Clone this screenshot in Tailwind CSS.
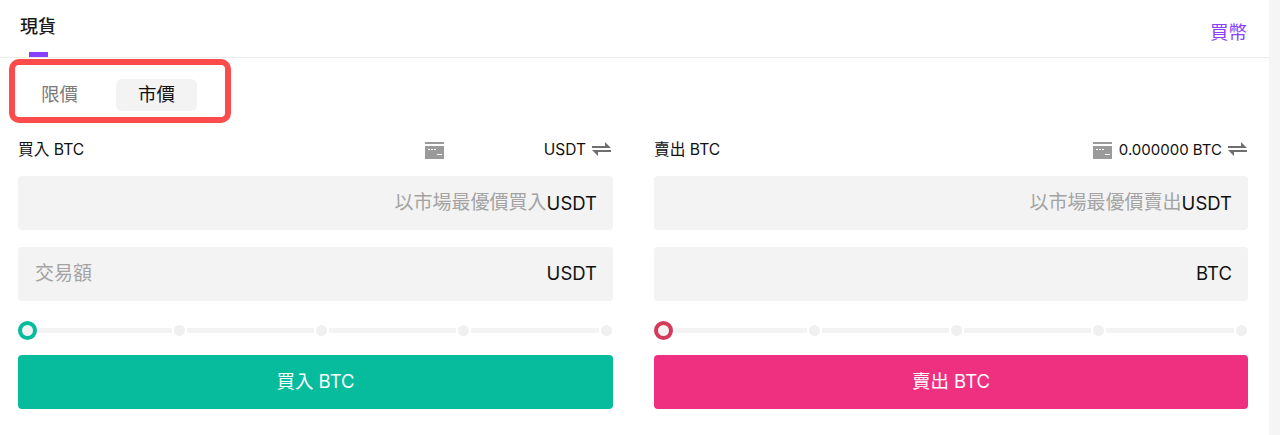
<!DOCTYPE html>
<html lang="zh-Hant">
<head>
    <meta charset="UTF-8">
    <title>現貨</title>
    <script src="https://cdn.jsdelivr.net/npm/@tailwindcss/browser@4"></script>
</head>
<body class="bg-white font-['Inter','Noto_Sans_CJK_TC',sans-serif] overflow-hidden">
    <div class="relative h-[435px] w-[1280px] flex">
        <main class="w-[1269px]">
            <!-- 頂部 -->
            <header class="h-[58px] border-b border-[#ebebeb] flex justify-between pl-5 pr-[22px]">
                <div class="relative h-[57px] w-9">
                    <span class="block pt-[14px] text-[18px] leading-[26px] font-medium text-[#1a1a1a] whitespace-nowrap">現貨</span>
                    <span class="absolute left-[9px] bottom-0 w-[19px] h-[5px] bg-[#8a3ffc]"></span>
                </div>
                <a class="pt-[19px] text-[18.500px] leading-[26px] text-[#8a3ffc]">買幣</a>
            </header>

            <!-- 限價 / 市價 -->
            <div class="flex items-center h-[32px] mt-[21px] pl-[41px]">
                <span class="text-[18.500px] text-[#7a7a7a] w-[75px]">限價</span>
                <span class="w-[81px] h-8 rounded-md bg-[#f3f3f3] flex items-center justify-center text-[18.500px] text-[#111]">市價</span>
            </div>

            <div class="flex pl-[18px] mt-[26px] gap-[41px]">
                <!-- 買入 -->
                <section class="w-[595px]">
                    <div class="h-6 pt-[2px] flex items-center justify-between text-[15.500px] text-[#111]">
                        <span class="text-[15.700px]">買入 BTC</span>
                        <div class="flex items-center">
                            <svg class="w-[19px] h-[17px] mr-[100px]" viewBox="0 0 19 17"><path fill="#9a9a9a" d="M0 0h19v2H0zM0 4h19v13H0z"/><path fill="#fff" d="M3 7h2v1H3zM6 7h2v1H6zM9 7h2v1H9zM12 12h5v1h-5z"/></svg>
                            <span>USDT</span>
                            <svg class="w-[19px] h-4 ml-[6px] mr-[2px]" viewBox="0 0 19 16"><path fill="#6f6f6f" d="M0 4h13V0l6 6H0zM19 10H6v4l-6-6h19z"/></svg>
                        </div>
                    </div>
                    <div class="mt-[15px] h-[54px] pt-px rounded bg-[#f3f3f3] flex items-center justify-end pl-[17px] pr-4 text-[19px]">
                        <span class="text-[#a3a3a3]">以市場最優價買入</span><span class="text-[#111] text-[18.500px]">USDT</span>
                    </div>
                    <div class="mt-[17px] h-[54px] rounded bg-[#f3f3f3] flex items-center justify-between pl-[17px] pr-4 text-[19px]">
                        <span class="text-[#a3a3a3]">交易額</span><span class="text-[#111] text-[18.500px]">USDT</span>
                    </div>
                    <div class="mt-5 h-[19px] flex items-center gap-[2px] pr-px">
                        <span class="w-[19px] h-[19px] rounded-full border-[4px] border-[#06bc9c] bg-[#f3f3f3] shrink-0"></span>
                        <span class="flex-1 h-[5px] bg-[#f3f3f3]"></span>
                        <span class="w-[11px] h-[11px] rounded-full bg-[#f0f0f0] shrink-0"></span>
                        <span class="w-[127px] h-[5px] bg-[#f3f3f3]"></span>
                        <span class="w-[11px] h-[11px] rounded-full bg-[#f0f0f0] shrink-0"></span>
                        <span class="w-[127px] h-[5px] bg-[#f3f3f3]"></span>
                        <span class="w-[11px] h-[11px] rounded-full bg-[#f0f0f0] shrink-0"></span>
                        <span class="w-[128px] h-[5px] bg-[#f3f3f3]"></span>
                        <span class="w-[11px] h-[11px] rounded-full bg-[#f0f0f0] shrink-0"></span>
                    </div>
                    <button class="mt-[15px] w-full h-[54px] rounded bg-[#06bc9c] text-white text-[18.500px]">買入 BTC</button>
                </section>

                <!-- 賣出 -->
                <section class="w-[594px]">
                    <div class="h-6 pt-[2px] flex items-center justify-between text-[15px] text-[#111]">
                        <span class="text-[15.700px]">賣出 BTC</span>
                        <div class="flex items-center">
                            <svg class="w-[19px] h-[17px] mr-[7px]" viewBox="0 0 19 17"><path fill="#9a9a9a" d="M0 0h19v2H0zM0 4h19v13H0z"/><path fill="#fff" d="M3 7h2v1H3zM6 7h2v1H6zM9 7h2v1H9zM12 12h5v1h-5z"/></svg>
                            <span>0.000000 BTC</span>
                            <svg class="w-[19px] h-4 ml-[6px] mr-px" viewBox="0 0 19 16"><path fill="#6f6f6f" d="M0 4h13V0l6 6H0zM19 10H6v4l-6-6h19z"/></svg>
                        </div>
                    </div>
                    <div class="mt-[15px] h-[54px] pt-px rounded bg-[#f3f3f3] flex items-center justify-end pl-[17px] pr-4 text-[19px]">
                        <span class="text-[#a3a3a3]">以市場最優價賣出</span><span class="text-[#111] text-[18.500px]">USDT</span>
                    </div>
                    <div class="mt-[17px] h-[54px] rounded bg-[#f3f3f3] flex items-center justify-end pl-[17px] pr-4 text-[18.500px] text-[#111]">BTC</div>
                    <div class="mt-5 h-[19px] flex items-center gap-[2px] pr-px">
                        <span class="w-[19px] h-[19px] rounded-full border-[4px] border-[#d63a5a] bg-[#f3f3f3] shrink-0"></span>
                        <span class="flex-1 h-[5px] bg-[#f3f3f3]"></span>
                        <span class="w-[11px] h-[11px] rounded-full bg-[#f0f0f0] shrink-0"></span>
                        <span class="w-[127px] h-[5px] bg-[#f3f3f3]"></span>
                        <span class="w-[11px] h-[11px] rounded-full bg-[#f0f0f0] shrink-0"></span>
                        <span class="w-[127px] h-[5px] bg-[#f3f3f3]"></span>
                        <span class="w-[11px] h-[11px] rounded-full bg-[#f0f0f0] shrink-0"></span>
                        <span class="w-[128px] h-[5px] bg-[#f3f3f3]"></span>
                        <span class="w-[11px] h-[11px] rounded-full bg-[#f0f0f0] shrink-0"></span>
                    </div>
                    <button class="mt-[15px] w-full h-[54px] rounded bg-[#ef2f80] text-white text-[18.500px]">賣出 BTC</button>
                </section>
            </div>
        </main>
        <!-- 捲軸 -->
        <div class="w-[11px] bg-[#f5f5f5]"></div>

        <!-- 紅框標註 -->
        <div class="absolute left-[9px] top-[59px] w-[222px] h-[64px] border-[6px] border-[#fb4b4b] rounded-[10px]"></div>
    </div>
</body>
</html>
